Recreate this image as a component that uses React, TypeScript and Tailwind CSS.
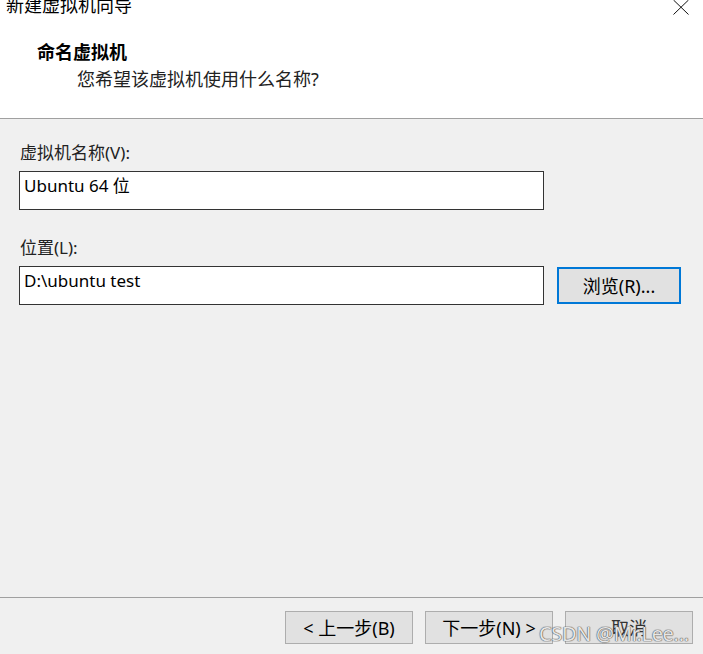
const FONT = "font-['Noto_Sans','Noto_Sans_CJK_SC',sans-serif]"

function Field({ label, value }: { label: string; value: string }) {
  return (
    <div>
      <p className="pl-px text-[17px] leading-[20px] text-[#222]">{label}</p>
      <div className="mt-[8px] flex h-[39px] w-[525px] items-start border border-[#333] bg-white pl-[4px] pt-[4px] text-[17px] leading-[20px] text-black">
        {value}
      </div>
    </div>
  )
}

function WizButton({ children }: { children: React.ReactNode }) {
  return (
    <button className="h-[33px] w-[128px] border border-[#adadad] bg-[#e1e1e1] text-[18px] leading-[20px] text-black">
      {children}
    </button>
  )
}

export default function App() {
  return (
    <div className={`${FONT} flex h-[654px] w-[703px] flex-col overflow-hidden bg-[#f0f0f0]`}>
      {/* header */}
      <div className="h-[119px] shrink-0 border-b border-[#a0a0a0] bg-white">
        <div className="flex items-start justify-between">
          <p className="-mt-[6px] pl-[6px] text-[18px] leading-[22px] text-black">新建虚拟机向导</p>
          <svg className="mr-[14px] mt-0" width="16" height="15" viewBox="0 0 16 15" fill="none">
            <path d="M0.5 0 L15.5 14.5 M15.5 0 L0.5 14.5" stroke="#111" strokeWidth="1" />
          </svg>
        </div>
        <p className="mt-[25px] pl-[37px] text-[18px] font-bold leading-[22px] text-black">命名虚拟机</p>
        <p className="mt-[5px] pl-[77px] text-[18px] leading-[22px] text-[#222]">您希望该虚拟机使用什么名称?</p>
      </div>

      {/* body */}
      <div className="flex-1 pl-[19px] pt-[24px]">
        <Field label="虚拟机名称(V):" value="Ubuntu 64 位" />
        <div className="mt-[28px] flex items-end gap-[13px]">
          <Field label="位置(L):" value="D:\ubuntu test" />
          <button className="mb-px h-[37px] w-[124px] border-2 border-[#0078d7] bg-[#e1e1e1] text-[18px] leading-[20px] text-black">
            浏览(R)...
          </button>
        </div>
      </div>

      {/* footer */}
      <div className="relative h-[57px] shrink-0 border-t border-[#a0a0a0]">
        <div className="flex justify-end gap-[12px] pr-[10px] pt-[13px]">
          <WizButton>&lt; 上一步(B)</WizButton>
          <WizButton>下一步(N) &gt;</WizButton>
          <WizButton>
            <span className="text-[#333]">取消</span>
          </WizButton>
        </div>
        {/* watermark */}
        <span className="absolute left-[539px] top-[25px] text-[20px] leading-[22px] tracking-[-0.3px] text-white/85 [text-shadow:0_0_1px_#555,0_0_1px_#555,0_0_1px_#555]">
          CSDN @Mr.Lee...
        </span>
      </div>
    </div>
  )
}
